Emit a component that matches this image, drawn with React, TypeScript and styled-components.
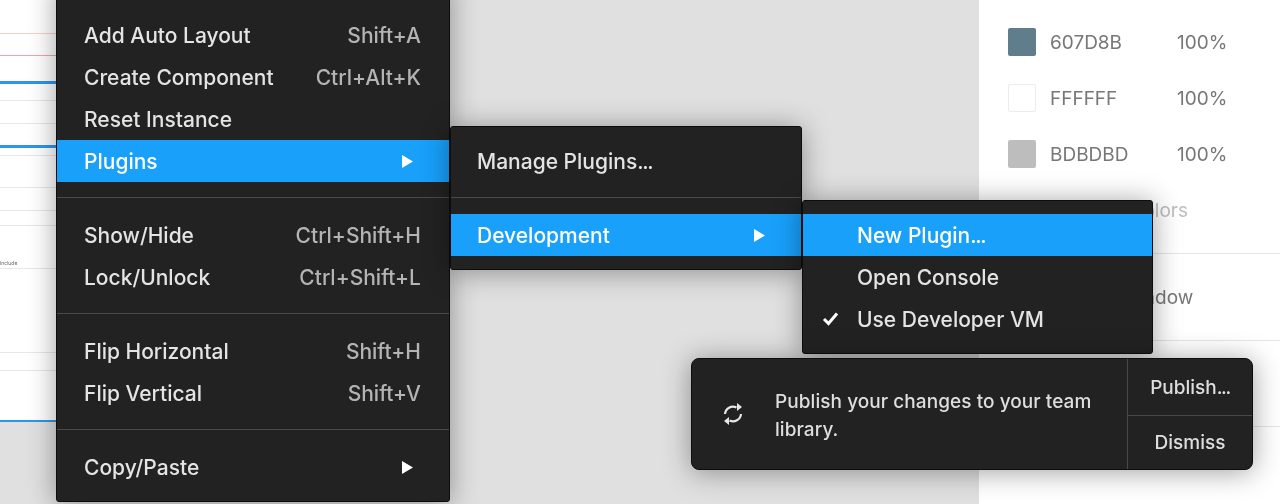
import React from "react";
import styled, { createGlobalStyle } from "styled-components";

const Global = createGlobalStyle`
  html, body { margin: 0; padding: 0; background: #e0e0e0; }
  body { font-family: Inter, "Liberation Sans", sans-serif; }
`;

const Stage = styled.div`
  position: relative;
  display: flex;
  width: 1280px;
  height: 504px;
  overflow: hidden;
  background: #e0e0e0;
  filter: blur(0.6px);
`;

const Canvas = styled.div`
  flex: 1;
  min-width: 0;
`;

const Sheet = styled.div`
  display: flex;
  flex-direction: column;
  width: 70px;
  height: 422px;
  box-sizing: border-box;
  background: #fff;
  border-bottom: 2px solid #2f96e6;
`;

const Rule = styled.div<{ $gap: number; $color: string; $size?: number }>`
  flex: none;
  height: ${(p) => p.$size ?? 1}px;
  margin-top: ${(p) => p.$gap}px;
  background: ${(p) => p.$color};
`;

const TinyLabel = styled.div`
  height: 8px;
  margin-top: 33px;
  margin-bottom: -44px;
  font-size: 5px;
  line-height: 8px;
  color: #666;
`;

const Panel = styled.aside`
  flex: none;
  width: 301px;
  height: 504px;
  background: #fff;
  color: #777;
  font-size: 19px;
`;

const ColorSection = styled.section`
  display: flex;
  flex-direction: column;
  height: 295px;
  padding-left: 29px;
  margin-top: -42px;
  border-bottom: 1px solid #e6e6e6;
`;

const ColorRow = styled.div`
  flex: none;
  display: grid;
  grid-template-columns: 28px 113px auto;
  column-gap: 14px;
  align-items: center;
  height: 56px;
  white-space: nowrap;
`;

const Swatch = styled.span<{ $color: string; $round?: boolean; $outlined?: boolean }>`
  display: block;
  width: 28px;
  height: 28px;
  border-radius: ${(p) => (p.$round ? "50%" : "2px")};
  background: ${(p) => p.$color};
  box-sizing: border-box;
  border: ${(p) => (p.$outlined ? "1px solid #ececec" : "none")};
`;

const SeeAll = styled.div`
  margin-top: 17px;
  padding-left: 35px;
  line-height: 24px;
  color: #bdbdbd;
`;

const EffectSection = styled.section<{ $height: number }>`
  display: flex;
  align-items: center;
  height: ${(p) => p.$height}px;
  padding-left: 93px;
  border-bottom: 1px solid #e6e6e6;
`;

const Menu = styled.div`
  position: absolute;
  box-sizing: border-box;
  padding: 13px 0;
  background: #222;
  border: 1px solid #0d0d0d;
  border-radius: 3px;
  box-shadow: 0 2px 28px rgba(0, 0, 0, 0.38);
  font-size: 21px;
  font-weight: 500;
  color: #e4e4e4;
  white-space: nowrap;
`;

const MainMenu = styled(Menu)`
  left: 56px;
  top: -20px;
  width: 394px;
  height: 522px;
  padding-top: 33px;
  z-index: 1;
`;

const PluginsMenu = styled(Menu)`
  left: 450px;
  top: 126px;
  width: 352px;
  z-index: 2;
`;

const DevMenu = styled(Menu)`
  left: 802px;
  top: 200px;
  width: 351px;
  z-index: 3;
`;

const Row = styled.div<{ $active?: boolean; $indent?: number }>`
  position: relative;
  display: flex;
  align-items: center;
  justify-content: space-between;
  height: 42px;
  padding: 0 28px 0 ${(p) => p.$indent ?? 27}px;
  background: ${(p) => (p.$active ? "#18a0fb" : "transparent")};
  color: ${(p) => (p.$active ? "#fff" : "inherit")};
`;

const Shortcut = styled.span`
  color: #b4b4b4;
`;

const Dots = styled.span`
  letter-spacing: -1.4px;
`;

const Separator = styled.div`
  height: 1px;
  margin: 15px 0 16px;
  background: #4a4a4a;
`;

const Arrow = styled.svg`
  display: block;
  width: 11px;
  height: 13px;
  margin-right: 8px;
  fill: #fff;
`;

const Check = styled.svg`
  position: absolute;
  left: 19px;
  top: 13px;
  width: 17px;
  height: 15px;
  fill: none;
  stroke: #fff;
  stroke-width: 3;
`;

const Toast = styled.div`
  position: absolute;
  left: 691px;
  top: 358px;
  z-index: 4;
  display: flex;
  width: 562px;
  height: 112px;
  box-sizing: border-box;
  background: #222;
  border: 1px solid #0d0d0d;
  border-radius: 8px;
  box-shadow: 0 2px 28px rgba(0, 0, 0, 0.38);
  color: #dedede;
  font-size: 19px;
  font-weight: 500;
`;

const ToastIcon = styled.svg`
  flex: none;
  align-self: center;
  width: 22px;
  height: 24px;
  margin: 0 31px 0 30px;
  fill: none;
  stroke: #e8e8e8;
  stroke-width: 2.2;
`;

const ToastMessage = styled.p`
  flex: 1;
  align-self: center;
  margin: 0;
  padding: 4px 30px 0 0;
  line-height: 28px;
  letter-spacing: 0.06px;
`;

const ToastActions = styled.div`
  flex: none;
  display: flex;
  flex-direction: column;
  width: 124px;
  border-left: 1px solid #4a4a4a;
`;

const ToastButton = styled.button`
  flex: none;
  height: 56px;
  padding: 0;
  border: 0;
  background: transparent;
  color: inherit;
  font: inherit;
  & + & {
    flex: 1;
    height: auto;
    border-top: 1px solid #4a4a4a;
  }
`;

const ArrowIcon = () => (
  <Arrow viewBox="0 0 11 13">
    <path d="M0 0 L11 6.5 L0 13 Z" />
  </Arrow>
);

const rules: { gap: number; color: string; size?: number }[] = [
  { gap: 33, color: "#f9cfc9" },
  { gap: 21, color: "#f0a8a0" },
  { gap: 25, color: "#2f96e6", size: 3 },
  { gap: 16, color: "#e8e8e8" },
  { gap: 22, color: "#e8e8e8" },
  { gap: 21, color: "#2f96e6", size: 3 },
  { gap: 7, color: "#e8e8e8" },
  { gap: 31, color: "#e8e8e8" },
  { gap: 22, color: "#e8e8e8" },
  { gap: 14, color: "#e8e8e8" },
];

const lowerRules = [
  { gap: 45, color: "#e8e8e8" },
  { gap: 83, color: "#e8e8e8" },
  { gap: 17, color: "#e8e8e8" },
];

export default function App() {
  return (
    <>
      <Global />
      <Stage>
        <Canvas>
          <Sheet>
            {rules.map((r, i) => (
              <Rule key={i} $gap={r.gap} $color={r.color} $size={r.size} />
            ))}
            <TinyLabel>Include</TinyLabel>
            {lowerRules.map((r, i) => (
              <Rule key={i} $gap={r.gap} $color={r.color} />
            ))}
          </Sheet>
        </Canvas>
        <Panel>
          <ColorSection>
            <ColorRow>
              <Swatch $color="#c6c6ce" $round />
            </ColorRow>
            <ColorRow>
              <Swatch $color="#607d8b" />
              <span>607D8B</span>
              <span>100%</span>
            </ColorRow>
            <ColorRow>
              <Swatch $color="#ffffff" $outlined />
              <span>FFFFFF</span>
              <span>100%</span>
            </ColorRow>
            <ColorRow>
              <Swatch $color="#bdbdbd" />
              <span>BDBDBD</span>
              <span>100%</span>
            </ColorRow>
            <SeeAll>See all 12 colors</SeeAll>
          </ColorSection>
          <EffectSection $height={86}>Drop Shadow</EffectSection>
          <EffectSection $height={85} />
        </Panel>

        <MainMenu>
          <Row>
            Add Auto Layout<Shortcut>Shift+A</Shortcut>
          </Row>
          <Row>
            Create Component<Shortcut>Ctrl+Alt+K</Shortcut>
          </Row>
          <Row>Reset Instance</Row>
          <Row $active>
            Plugins
            <ArrowIcon />
          </Row>
          <Separator />
          <Row>
            Show/Hide<Shortcut>Ctrl+Shift+H</Shortcut>
          </Row>
          <Row>
            Lock/Unlock<Shortcut>Ctrl+Shift+L</Shortcut>
          </Row>
          <Separator />
          <Row>
            Flip Horizontal<Shortcut>Shift+H</Shortcut>
          </Row>
          <Row>
            Flip Vertical<Shortcut>Shift+V</Shortcut>
          </Row>
          <Separator />
          <Row>
            Copy/Paste
            <ArrowIcon />
          </Row>
        </MainMenu>

        <PluginsMenu>
          <Row $indent={26}>
            <span>
              Manage Plugins<Dots>...</Dots>
            </span>
          </Row>
          <Separator />
          <Row $active $indent={26}>
            Development
            <ArrowIcon />
          </Row>
        </PluginsMenu>

        <DevMenu>
          <Row $active $indent={54}>
            <span>
              New Plugin<Dots>...</Dots>
            </span>
          </Row>
          <Row $indent={54}>Open Console</Row>
          <Row $indent={54}>
            <Check viewBox="0 0 17 15">
              <path d="M2 8 L6.5 12.5 L15 2.5" />
            </Check>
            Use Developer VM
          </Row>
        </DevMenu>

        <Toast>
          <ToastIcon viewBox="0 0 22 24">
            <path d="M3 12 A8 8 0 0 1 14.5 5.5" />
            <path d="M15 1 L15 9 L20 5 Z" fill="#e8e8e8" stroke="none" />
            <path d="M19 12 A8 8 0 0 1 7.5 18.5" />
            <path d="M7 15 L7 23 L2 19 Z" fill="#e8e8e8" stroke="none" />
          </ToastIcon>
          <ToastMessage>Publish your changes to your team library.</ToastMessage>
          <ToastActions>
            <ToastButton>
              Publish<Dots>...</Dots>
            </ToastButton>
            <ToastButton>Dismiss</ToastButton>
          </ToastActions>
        </Toast>
      </Stage>
    </>
  );
}
